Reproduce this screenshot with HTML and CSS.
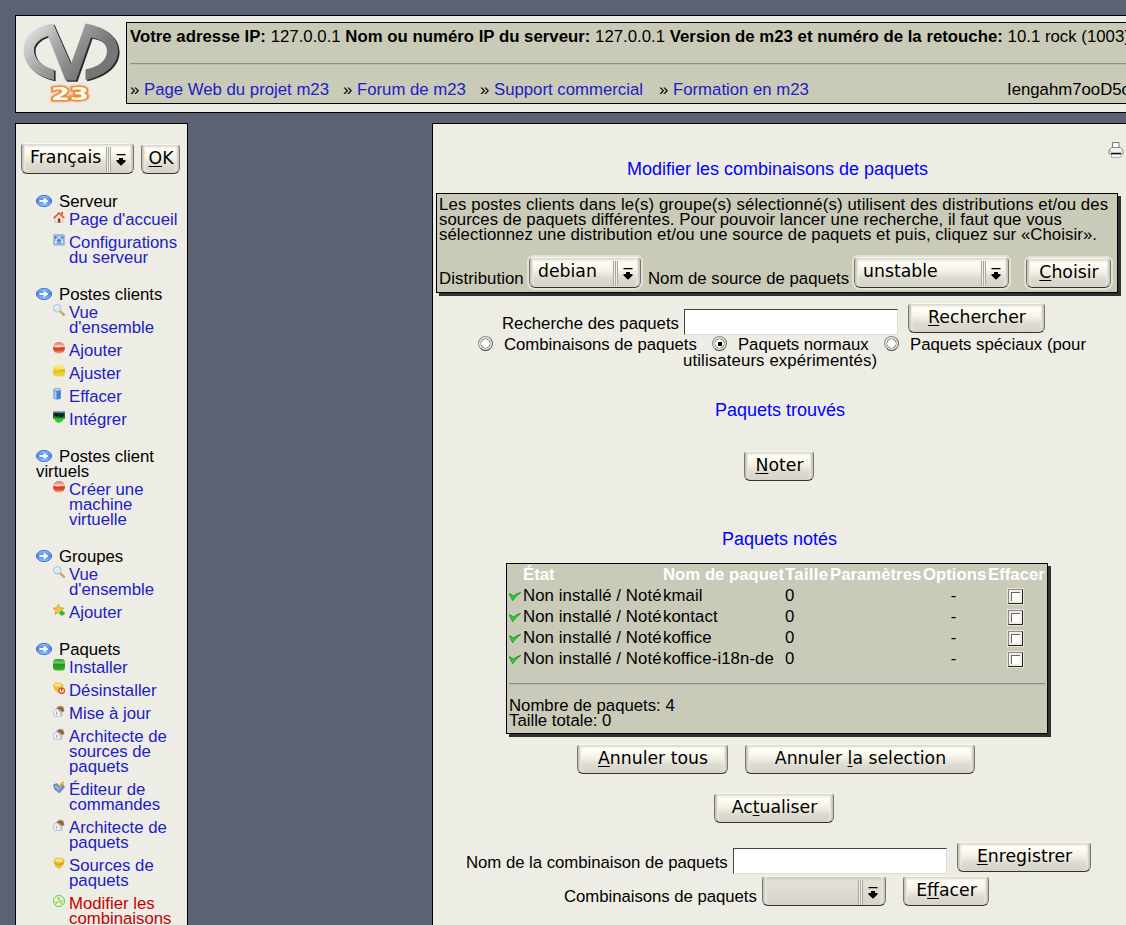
FILE: index.html
```html
<!DOCTYPE html>
<html lang="fr">
<head>
<meta charset="utf-8">
<title>m23</title>
<link rel="stylesheet" href="styles.css">
</head>
<body>
<svg class="defs" width="0" height="0" aria-hidden="true">
<defs>
<linearGradient id="gm" x1="0" y1=".2" x2=".75" y2=".6"><stop offset="0" stop-color="#e2e2e2"/><stop offset=".45" stop-color="#a8a8a8"/><stop offset="1" stop-color="#767676"/></linearGradient>
<linearGradient id="gb" x1="0" y1="0" x2="0" y2="1"><stop offset="0" stop-color="#8fc0fb"/><stop offset=".5" stop-color="#4a86ee"/><stop offset="1" stop-color="#8fd0ff"/></linearGradient>
<linearGradient id="gr" x1="0" y1="0" x2="0" y2="1"><stop offset="0" stop-color="#e2745e"/><stop offset=".4" stop-color="#f6c4b6"/><stop offset=".5" stop-color="#da3c1e"/><stop offset=".75" stop-color="#e0532f"/><stop offset="1" stop-color="#f5b49c"/></linearGradient>
<linearGradient id="gy" x1="0" y1="0" x2="0" y2="1"><stop offset="0" stop-color="#f7ec8a"/><stop offset=".35" stop-color="#f3e06a"/><stop offset=".45" stop-color="#e5c51f"/><stop offset="1" stop-color="#ecd54a"/></linearGradient>
<linearGradient id="gg" x1="0" y1="0" x2="0" y2="1"><stop offset="0" stop-color="#2f9a25"/><stop offset=".35" stop-color="#7ccc70"/><stop offset=".45" stop-color="#1c9a14"/><stop offset="1" stop-color="#35b52c"/></linearGradient>
<symbol id="arrow" viewBox="0 0 16 12"><ellipse cx="8" cy="6" rx="7.6" ry="5.6" fill="url(#gb)" stroke="#3c63c4" stroke-width=".9"/><path d="M3.500 5h4.200V2.600L12.600 6 7.700 9.400V7H3.500z" fill="#fff"/></symbol>
<symbol id="home" viewBox="0 0 12 12"><path d="M2 6h8v5.500H2z" fill="#f6f0ea" stroke="#b9aaa0" stroke-width=".6"/><path d="M0 6.800 6 .8l6 6-1.300.8L6 3.300 1.300 7.600z" fill="#e2562a"/><path d="M8.300 1h1.700v3L8.300 2.600z" fill="#c9401d"/><path d="M4.800 7.500h2.600v4H4.800z" fill="#7a3d22"/></symbol>
<symbol id="conf" viewBox="0 0 12 12"><rect x=".4" y=".4" width="11.200" height="10.800" rx="1.200" fill="#8fb4e2" stroke="#9ab6da" stroke-width=".8"/><path d="M2.500 9.500L4 3.500M6 2v3.500M9.500 9.500L8 3.500" stroke="#e8f1fc" stroke-width="1.200"/><path d="M2 3l1.500 1.500M10 3L8.500 4.500M4.500 7L6 5.500 7.500 7M5.500 9h1" stroke="#3463a8" stroke-width="1.200" fill="none"/></symbol>
<symbol id="loupe" viewBox="0 0 12 12"><path d="M6.800 6.800l4 4" stroke="#b9923e" stroke-width="2.200" stroke-linecap="round"/><path d="M7 7l3.500 3.500" stroke="#ecd594" stroke-width=".8"/><circle cx="4.300" cy="4.300" r="3.700" fill="#d5ecf5" stroke="#a5c3d3"/><path d="M2.300 4.200a2 2 0 0 1 2-1.900" fill="none" stroke="#fff"/></symbol>
<symbol id="red" viewBox="0 0 12 12"><rect x="0" y="0" width="12" height="11.500" rx="5.500" fill="url(#gr)"/><path d="M1.500 4.800q4-2 8-.8l-4 1.600z" fill="#fff" opacity=".75"/></symbol>
<symbol id="yellow" viewBox="0 0 12 12"><rect x="0" y="0" width="12" height="11.500" rx="4" fill="url(#gy)"/><path d="M8 5.300h4" stroke="#c79b13" stroke-width=".8"/></symbol>
<symbol id="green" viewBox="0 0 12 12"><rect x="0" y="0" width="12" height="11.500" rx="3.500" fill="url(#gg)"/></symbol>
<symbol id="bin" viewBox="0 0 12 12"><path d="M.5 1.500h7.300v9.200q-3.600 1.600-7.300 0z" fill="#3f83d8"/><path d="M1.200 2.500h2.300v8.200H1.200z" fill="#a5ccf5"/><ellipse cx="4.200" cy="1.600" rx="3.600" ry="1.300" fill="#cfe3f8" stroke="#4174b6" stroke-width=".6"/></symbol>
<symbol id="integ" viewBox="0 0 12 12"><path d="M0 .5h12v7H0z" fill="#1f5f55"/><path d="M1 7h10.500L9 10.500 6 12 2.500 10.500z" fill="#1cd321"/><path d="M0 6.800h12" stroke="#1d8a33"/><path d="M1.500 4.500l1-2 1 2 1-2 1 3M7 2v3.500h1.500V3M10 2v3.500" fill="none" stroke="#07131c" stroke-width="1.300"/><path d="M0 1h12" stroke="#8fc0cc" stroke-width=".8"/></symbol>
<symbol id="star" viewBox="0 0 12 12"><path d="M5.500.3l1.600 3.500 3.900.3-3 2.600 1 3.900-3.500-2.100-3.400 2.100.9-3.900L0 4.100l3.900-.3z" fill="#f0c93b" stroke="#b98f22" stroke-width=".6"/><path d="M9 6.800v4.800M6.600 9.200h5" stroke="#24b82a" stroke-width="2.600"/></symbol>
<symbol id="shield" viewBox="0 0 12 12"><path d="M.5 3l2.500-2.200h6L11.500 3l-.5 4-2 2.500L6 12 2.500 9.500 1 6.500z" fill="#e9bd31"/><path d="M2 2.500q4-2 8 0L9 5H3z" fill="#f9e48a"/><path d="M1.500 6.500q5 2 9 0" fill="none" stroke="#b88a1c" stroke-width=".7"/></symbol>
<symbol id="shieldx" viewBox="0 0 12 12"><path d="M0 3l2-2.200h6L10.500 3l-.5 4-2 2.500-3 1.500L1.500 8z" fill="#e9bd31"/><path d="M1 2.500q4-2 8 0L8 4.500H2z" fill="#f9e48a"/><circle cx="8.700" cy="8.700" r="3.300" fill="#e0432a"/><path d="M7.400 7v2.800h2.600V7" fill="none" stroke="#fff" stroke-width="1.100"/></symbol>
<symbol id="pkg" viewBox="0 0 12 12"><path d="M3 3.500Q6-1 10.500 2l1 4-3 1z" fill="#b18a5c"/><path d="M5 3l4 .5 1 3" stroke="#6d4a24" stroke-width="1.200" fill="none"/><path d="M1.500 4.500l3.500-.5 1 2.500 3 .5v4.500H1L.3 7z" fill="#e9eef4" stroke="#b2bac4" stroke-width=".7"/><path d="M8 6.500v4.500M3.500 7v3" stroke="#9dabbc" stroke-width="1"/></symbol>
<symbol id="edit" viewBox="0 0 12 12"><path d="M.5 4l3-1.500 3 2.500L9.500 3l2 3-5 6L2 8.500z" fill="#6c96dc" stroke="#3a62a8" stroke-width=".6"/><path d="M2 5l4 3.500" stroke="#cfe0fa"/><path d="M5.500 6.500L10.500.8" stroke="#eda52b" stroke-width="2"/></symbol>
<symbol id="combo" viewBox="0 0 12 12"><circle cx="6" cy="6" r="5.500" fill="#eefbe8" stroke="#22d833" stroke-width=".9"/><path d="M6 6L4 1.500M6 6l5-1M6 6l-4 4M6 6l3 4" stroke="#6ce36c" stroke-width=".7"/><g fill="#e3bb37"><rect x="4.800" y="2.300" width="2.400" height="2.200"/><rect x="2.300" y="6.300" width="2.600" height="2.200"/><rect x="7" y="6.300" width="2.600" height="2.200"/></g></symbol>
<symbol id="tick" viewBox="0 0 12 10"><path d="M.3 2.200L3.600 9.200Q7 4.300 11.800.8 7 2.200 4 4.800L2.600 3z" fill="#1fdc1f" stroke="#157a1c" stroke-width=".7"/></symbol>
<symbol id="down" viewBox="0 0 10 12"><path d="M.5 0h9v1.300h-9zM3 4h4v2h2.500v1.500L5 11.700.5 7.500V6H3z" fill="#000"/></symbol>
<symbol id="print" viewBox="0 0 16 16"><path d="M4.500 6V.5h6.500V6" fill="#fdfdfd" stroke="#777"/><path d="M1 8l2.500-2.500h9L15 8v4H1z" fill="#f0f0ee" stroke="#8a8a8a"/><path d="M3 11.500h10" stroke="#111" stroke-width="1.500"/><path d="M3.500 12.500h9.500v2.800H3.500z" fill="#fff" stroke="#999" stroke-width=".8"/><circle cx="2.600" cy="9" r=".7" fill="#4fd14f"/></symbol>
<path id="mark" d="M30 1.500L48 42 62.500 1.500C83 5 95 15 95 29 95 43 82 54 62.500 58V47.500C76 45 84 38 84 29 84 22 78 17 68 15.500L53 58.500H42.500L25 14C16 17 11 22 11 28 11 37 18 44 31 47.500V58C12 54 .7 43 .7 28 .7 14 12 4 30 1.500Z"/>
</defs>
</svg>
<div class="page">
<header class="top">
  <svg class="logo" width="100" height="82" viewBox="0 0 100 82">
    <use href="#mark" x="1.600" y="1.200" fill="#2a2a2a"/>
    <use href="#mark" fill="url(#gm)"/>
    <text class="logo-num" x="28" y="77.500" textLength="38" lengthAdjust="spacingAndGlyphs">23</text>
  </svg>
  <div class="info">
    <div class="info-line"><b>Votre adresse IP:</b> 127.0.0.1 <b>Nom ou numéro IP du serveur:</b> 127.0.0.1 <b>Version de m23 et numéro de la retouche:</b> 10.1 rock (1003)</div>
    <hr>
    <div class="info-links"><span class="l1">» <a>Page Web du projet m23</a></span><span class="l2">» <a>Forum de m23</a></span><span class="l3">» <a>Support commercial</a></span><span class="l4">» <a>Formation en m23</a></span><span>Iengahm7ooD5o</span></div>
  </div>
</header>
<div class="cols">
<nav class="side">
  <div class="lang"><div class="sel sel-lang"><span>Français</span><i></i><svg><use href="#down"/></svg></div><div class="btn btn-ok"><span><u>O</u>K</span></div></div>
  <section><h3><svg><use href="#arrow"/></svg>Serveur</h3>
    <a><svg><use href="#home"/></svg>Page d'accueil</a>
    <a><svg><use href="#conf"/></svg>Configurations<br>du serveur</a></section>
  <section><h3><svg><use href="#arrow"/></svg>Postes clients</h3>
    <a><svg><use href="#loupe"/></svg>Vue<br>d'ensemble</a>
    <a><svg><use href="#red"/></svg>Ajouter</a>
    <a><svg><use href="#yellow"/></svg>Ajuster</a>
    <a><svg><use href="#bin"/></svg>Effacer</a>
    <a><svg><use href="#integ"/></svg>Intégrer</a></section>
  <section><h3><svg><use href="#arrow"/></svg>Postes client<br>virtuels</h3>
    <a><svg><use href="#red"/></svg>Créer une<br>machine<br>virtuelle</a></section>
  <section><h3><svg><use href="#arrow"/></svg>Groupes</h3>
    <a><svg><use href="#loupe"/></svg>Vue<br>d'ensemble</a>
    <a><svg><use href="#star"/></svg>Ajouter</a></section>
  <section><h3><svg><use href="#arrow"/></svg>Paquets</h3>
    <a><svg><use href="#green"/></svg>Installer</a>
    <a><svg><use href="#shieldx"/></svg>Désinstaller</a>
    <a><svg><use href="#pkg"/></svg>Mise à jour</a>
    <a><svg><use href="#pkg"/></svg>Architecte de<br>sources de<br>paquets</a>
    <a><svg><use href="#edit"/></svg>Éditeur de<br>commandes</a>
    <a><svg><use href="#pkg"/></svg>Architecte de<br>paquets</a>
    <a><svg><use href="#shield"/></svg>Sources de<br>paquets</a>
    <a class="current"><svg><use href="#combo"/></svg>Modifier les<br>combinaisons</a></section>
</nav>
<main class="main">
  <div class="print"><svg width="16" height="16"><use href="#print"/></svg></div>
  <h1>Modifier les combinaisons de paquets</h1>
  <div class="box choose">
    <p><span class="wide">Les postes clients dans le(s) groupe(s) sélectionné(s) utilisent des distributions et/ou des</span><br>sources de paquets différentes. Pour pouvoir lancer une recherche, il faut que vous<br>sélectionnez une distribution et/ou une source de paquets et puis, cliquez sur «Choisir».</p>
    <div class="row"><label class="w-dist">Distribution</label><div class="sel halo sel-debian"><span>debian</span><i></i><svg><use href="#down"/></svg></div><label class="w-src">Nom de source de paquets</label><div class="sel halo sel-unstable"><span>unstable</span><i></i><svg><use href="#down"/></svg></div><div class="btn halo btn-choose"><span><u>C</u>hoisir</span></div></div>
  </div>
  <div class="row search"><label class="w-search">Recherche des paquets</label><div class="field"></div><div class="btn btn-search"><span><u>R</u>echercher</span></div></div>
  <div class="radios"><i class="radio"></i><span class="r1">Combinaisons de paquets</span><i class="radio on"></i><span class="r2">Paquets normaux</span><i class="radio"></i><span>Paquets spéciaux (pour</span></div>
  <div class="radios-2 wide">utilisateurs expérimentés)</div>
  <h2 class="found">Paquets trouvés</h2>
  <div class="btn btn-note"><span><u>N</u>oter</span></div>
  <h2 class="noted">Paquets notés</h2>
  <div class="box list">
    <div class="tr th"><span></span><span>État</span><span>Nom de paquet</span><span class="taille">Taille</span><span>Paramètres</span><span>Options</span><span>Effacer</span></div>
    <div class="tr"><svg><use href="#tick"/></svg><span>Non installé / Noté</span><span>kmail</span><span>0</span><span></span><span class="c">-</span><i class="check"></i></div>
    <div class="tr"><svg><use href="#tick"/></svg><span>Non installé / Noté</span><span>kontact</span><span>0</span><span></span><span class="c">-</span><i class="check"></i></div>
    <div class="tr"><svg><use href="#tick"/></svg><span>Non installé / Noté</span><span>koffice</span><span>0</span><span></span><span class="c">-</span><i class="check"></i></div>
    <div class="tr"><svg><use href="#tick"/></svg><span>Non installé / Noté</span><span>koffice-i18n-de</span><span>0</span><span></span><span class="c">-</span><i class="check"></i></div>
    <hr>
    <p>Nombre de paquets: 4<br>Taille totale: 0</p>
  </div>
  <div class="row cancel"><div class="btn btn-all"><span><u>A</u>nnuler tous</span></div><div class="btn btn-part"><span>Annuler <u>l</u>a selection</span></div></div>
  <div class="btn btn-refresh"><span>Ac<u>t</u>ualiser</span></div>
  <div class="row save"><label class="w-name">Nom de la combinaison de paquets</label><div class="field"></div><div class="btn btn-save"><span><u>E</u>nregistrer</span></div></div>
  <div class="row remove"><label class="w-combo">Combinaisons de paquets</label><div class="sel sel-empty"><span></span><i></i><svg><use href="#down"/></svg></div><div class="btn btn-del"><span>E<u>f</u>facer</span></div></div>
</main>
</div>
</div>
</body>
</html>
```
FILE: styles.css
```css
* { box-sizing: border-box; }
html, body { margin: 0; height: 925px; overflow: hidden; }
body { background: #5b6373; font: 16.75px/15px "Liberation Sans", Arial, sans-serif; color: #000; white-space: nowrap; }
h1, h2, h3, p { margin: 0; font-weight: normal; }
a { color: #2020c4; }
.defs { display: block; height: 0; }
.page { padding: 15px 0 0 15px; height: 925px; overflow: hidden; }
.top { display: flex; width: 1285px; height: 98px; border: 1px solid #000; background: #eeede5; padding: 6px 0 0 7px; }
.logo { flex: none; margin-right: 3px; }
.logo-num { font: bold 18.5px "DejaVu Sans", sans-serif; fill: #fffdf4; stroke: #f0902e; stroke-width: 2.500px; paint-order: stroke; filter: drop-shadow(0 0 1px #e8604c); }
.info { width: 1150px; height: 82px; border: 1px solid #000; background: #cacab8; padding: 6px 3px 0; }
hr { border: 0; height: 2px; margin: 0; background: #8c8c90; border-bottom: 1px solid #bcbcb8; }
.info-line { height: 34px; letter-spacing: .02px; }
.info-links { display: flex; padding-top: 17px; }
.l1 { width: 213px; } .l2 { width: 137px; } .l3 { width: 179px; } .l4 { width: 348px; }
.cols { display: flex; align-items: flex-start; margin-top: 10px; gap: 244px; }
.side { width: 173px; height: 820px; border: 1px solid #000; background: #eeede5; padding: 18px 0 0 5px; flex: none; }
.lang { display: flex; align-items: flex-end; gap: 7px; height: 32px; margin-bottom: 20px; }
.side section { margin-bottom: 22px; padding-left: 15px; }
.side h3 { font-size: inherit; margin-bottom: 3px; }
.side h3 svg { width: 16px; height: 12px; margin: 1px 7px 0 0; vertical-align: top; }
.side a { display: block; padding-left: 33px; margin-bottom: 8px; }
.side a svg { width: 12px; height: 12px; margin: -1px 4px 0 -16px; vertical-align: top; }
.side .current { color: #c40000; }

.btn, .sel { height: 30px; flex: none; border: 1px solid #77766f; border-top-color: #f8f6ee; border-bottom: 1px solid #33332f; border-radius: 4px 4px 6px 6px; background: linear-gradient(#d9d7cb, #fffef8 4px, #f6f4ea 12px, #dddbcf 20px, #d6d4c8); box-shadow: inset 3px 0 2px -1px #c5c3b8, inset -3px 0 2px -1px #c5c3b8, inset 5px 0 2px -2px #fbf9f0, inset -5px 0 2px -2px #fbf9f0; font: 17.3px/20px "DejaVu Sans", sans-serif; }
.btn { display: flex; justify-content: center; padding: 3px 0 0 1px; }
.btn u { text-decoration-thickness: 1px; text-underline-offset: 2px; text-decoration-skip-ink: none; }
.halo { outline: 2px solid #e4e0d2; outline-offset: 0; }
.sel { display: flex; height: 31px; padding: 3px 7px 0 8px; }
.sel span { flex: 1; }
.sel i { width: 5px; height: 25px; background: repeating-linear-gradient(90deg, #aaa89f 0 1px, #f2f0e8 1px 2px); margin-right: 5px; }
.sel svg { width: 10px; height: 12px; margin-top: 7px; }
.sel-lang { width: 113px; } .btn-ok { width: 39px; }

.main { width: 720px; height: 820px; border: 1px solid #000; background: #eeede5; padding-left: 3px; flex: none; }
.print { width: 688px; height: 34px; display: flex; justify-content: flex-end; align-items: flex-end; margin-bottom: 2px; }
h1, h2 { width: 683px; text-align: center; font-size: 18px; line-height: 18px; color: #00f; }
.box { border: 1px solid #000; background: #cacab8; box-shadow: 3px 3px 0 #2f3130; }
.choose { width: 682px; height: 100px; margin-top: 15px; padding: 3px 2px 0; }
.choose p { letter-spacing: .07px; }
.choose .wide, .wide { letter-spacing: .13px; }
.row { display: flex; align-items: flex-start; }
.choose .row { margin-top: 15px; }
label { display: block; flex: none; }
.choose label { margin-top: 14px; }
.choose .sel { height: 31px; padding-top: 3px; }
.choose .btn { margin-top: 1px; }
.w-dist { width: 90px; letter-spacing: .08px; } .sel-debian { width: 112px; margin-right: 7px; } .w-src { width: 206px; } .sel-unstable { width: 155px; margin-right: 17px; } .btn-choose { width: 85px; }
.search { margin-top: 10px; padding-left: 66px; height: 34px; }
.search label { margin-top: 13px; }
.field { width: 214px; height: 26px; background: #fff; border: 1px solid #ddd; border-top-color: #444; border-left-color: #444; }
.search .field, .save .field { margin: 6px 10px 0 0; }
.w-search { width: 182px; } .btn-search { width: 137px; }
.radios { display: flex; padding-left: 42px; height: 16px; }
.radio { width: 15px; height: 15px; border-radius: 50%; border: 1px solid #8e8c84; border-bottom-color: #44423e; border-right-color: #6a6860; background: radial-gradient(#fff 0 4px, #77756d 4.500px, #f1efe6 5.500px); margin-right: 11px; margin-top: -1px; }
.radio.on { background: linear-gradient(#000, #000) center / 4px 4px no-repeat, radial-gradient(#fff 0 4px, #77756d 4.500px, #f1efe6 5.500px); }
.r1 { width: 208px; letter-spacing: -.04px; } .r2 { width: 146px; letter-spacing: -.05px; }
.radios-2 { padding-left: 247px; }
.found { margin-top: 33px; padding-left: 5px; }
.btn-note { width: 70px; margin: 32px 0 0 308px; }
.noted { margin-top: 49px; padding-left: 4px; }
.list { width: 542px; height: 171px; margin: 15px 0 0 70px; padding: 0 2px; }
.tr { display: grid; grid-template-columns: 14px 140px 122px 45px 93px 65px 1fr; height: 21px; line-height: 21px; letter-spacing: .09px; }
.th { color: #fff; font-weight: bold; letter-spacing: 0; }
.taille { letter-spacing: .3px; }
.tr svg { width: 12px; height: 11px; margin-top: 6px; }
.c { text-align: center; padding-right: 4px; }
.check { width: 15px; height: 15px; margin: 4px 0 0 20px; border: 1px solid #8c8a82; border-right-color: #222; border-bottom-color: #222; background: linear-gradient(#fff, #fff) 3px 3px / 8px 8px no-repeat, linear-gradient(#666, #666) 2px 2px / 9px 9px no-repeat, #f0ede4; outline: 1px solid #e8e5d8; }
.list hr { margin: 14px 0 13px; }
.cancel { margin-top: 10px; padding-left: 141px; gap: 17px; }
.btn-all { width: 151px; } .btn-part { width: 230px; }
.btn-refresh { width: 120px; margin: 19px 0 0 278px; }
.save { margin-top: 19px; padding-left: 30px; height: 34px; }
.save label { margin-top: 13px; } .w-name { width: 267px; letter-spacing: -.03px; } .btn-save { width: 134px; }
.remove { padding-left: 128px; }
.remove label { margin-top: 13px; } .w-combo { width: 198px; letter-spacing: -.04px; } .sel-empty { width: 124px; height: 30px; margin-right: 17px; background: linear-gradient(#c9c7bc, #e2e0d8 4px, #d6d4c8); } .btn-del { width: 86px; }
```
